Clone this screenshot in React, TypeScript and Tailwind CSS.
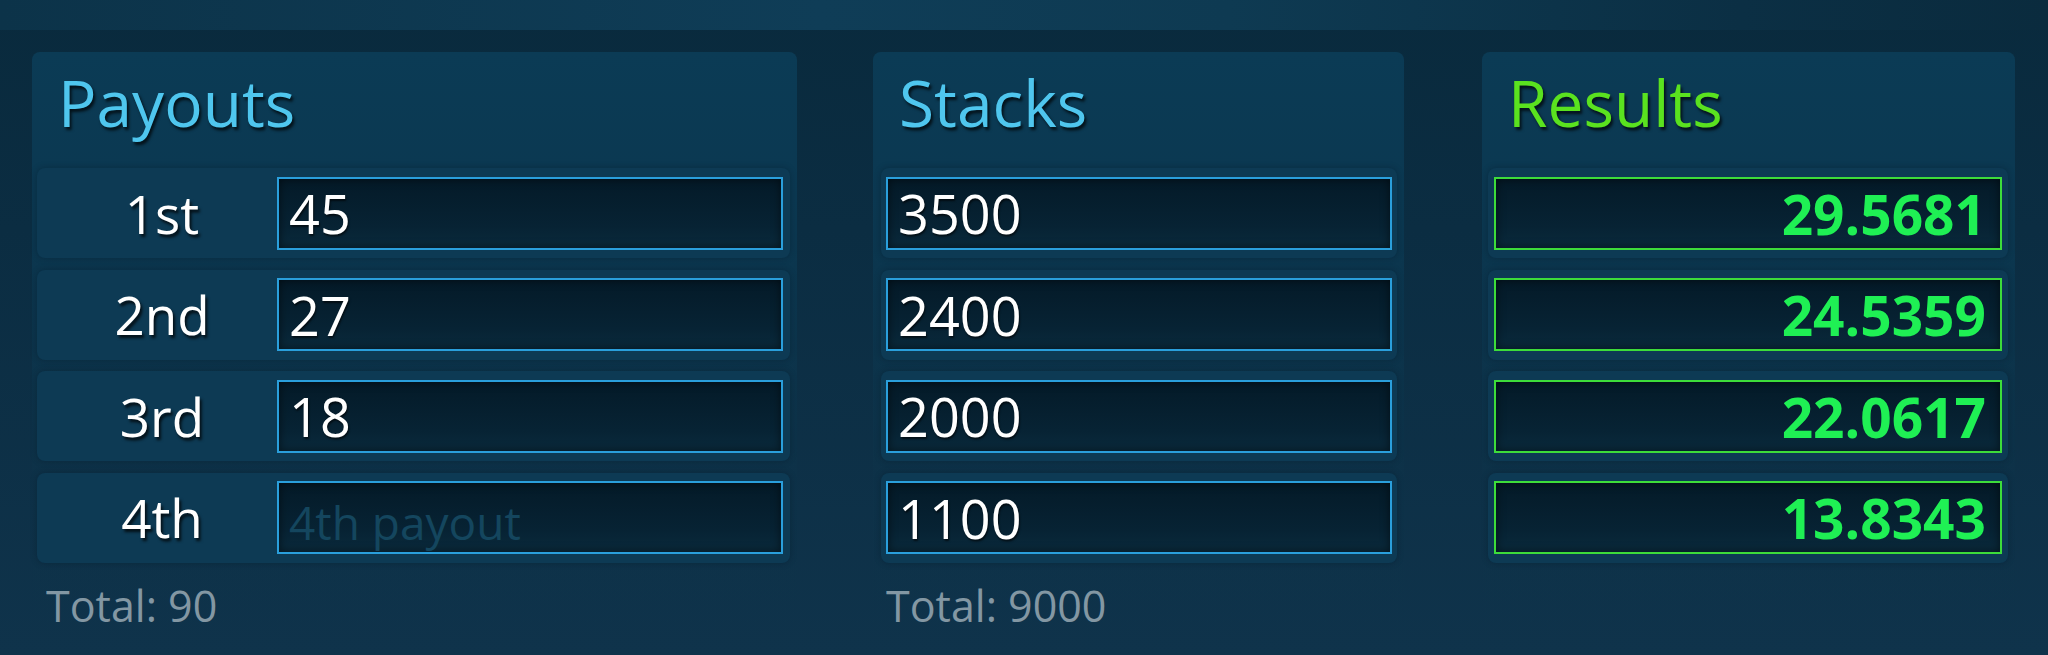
import React from "react";

const shadowText = "[text-shadow:2px_3px_3px_rgba(0,0,0,0.75)]";

function Title({ text, color }: { text: string; color: string }) {
  return (
    <div
      className={`pl-[26px] h-[64px] leading-[64px] text-[64px] ${color} [text-shadow:2px_3px_3px_rgba(0,0,0,0.7)]`}
    >
      {text}
    </div>
  );
}

function Row({ children, cls }: { children: React.ReactNode; cls: string }) {
  return (
    <div
      className={`h-[90px] flex items-center rounded-[8px] bg-[#0d3a54] shadow-[0_0_6px_rgba(0,20,35,0.35)] ${cls}`}
    >
      {children}
    </div>
  );
}

function Field({
  value,
  placeholder,
  green,
}: {
  value?: string;
  placeholder?: string;
  green?: boolean;
}) {
  return (
    <div
      className={`flex-1 h-[73px] flex items-center border-2 ${
        green
          ? "border-[#3ddc3a] justify-end pr-[14px]"
          : "border-[#2a9fdc] pl-[10px]"
      } bg-[linear-gradient(180deg,#041a28_0%,#072334_70%,#0a2a3c_100%)] shadow-[inset_0_0_10px_rgba(0,0,0,0.55)]`}
    >
      {value ? (
        <span
          className={
            green
              ? "text-[55px] font-bold text-[#1ff054] leading-none"
              : "text-[54px] text-white leading-none [text-shadow:1px_2px_2px_rgba(0,0,0,0.6)]"
          }
        >
          {value}
        </span>
      ) : (
        <span className="text-[46px] text-[#14465e] leading-none pt-[8px]">{placeholder}</span>
      )}
    </div>
  );
}

const panelBg =
  "rounded-[8px] bg-[linear-gradient(180deg,#0b3b55_0%,#0b3851_25%,rgba(13,52,74,0.4)_70%,rgba(14,50,72,0)_100%)]";

export default function App() {
  const payouts = [
    { label: "1st", value: "45" },
    { label: "2nd", value: "27" },
    { label: "3rd", value: "18" },
    { label: "4th", value: "", placeholder: "4th payout" },
  ];
  const stacks = ["3500", "2400", "2000", "1100"];
  const results = ["29.5681", "24.5359", "22.0617", "13.8343"];

  return (
    <div className="w-[2048px] h-[655px] overflow-hidden bg-[linear-gradient(180deg,#092a3d_0%,#0b2d42_35%,#0f334b_100%)] font-['Open_Sans',_'Noto_Sans',_sans-serif]">
      <div className="h-[30px] bg-[linear-gradient(90deg,#0c3349_0%,#0f3d57_40%,#0e3a52_60%,#0b2f44_85%,#0a2b3e_100%)]" />
      <div className="flex pl-[32px] pt-[22px]">
        {/* Payouts */}
        <div className={`w-[765px] h-[580px] pt-[19px] ${panelBg}`}>
          <Title text="Payouts" color="text-[#4fc6ee]" />
          <div className="mt-[33px] ml-[5px] mr-[7px] flex flex-col gap-[11.5px]">
            {payouts.map((p) => (
              <Row key={p.label} cls="pr-[7px]">
                <div
                  className={`w-[240px] pl-[10px] text-center text-[53px] text-white leading-none ${shadowText}`}
                >
                  {p.label}
                </div>
                <Field value={p.value} placeholder={p.placeholder} />
              </Row>
            ))}
          </div>
          <div className="mt-[21px] pl-[14px] text-[43px] leading-[43px] text-[#8397a3]">
            Total: 90
          </div>
        </div>

        {/* Stacks */}
        <div className={`ml-[76px] w-[531px] h-[580px] pt-[19px] ${panelBg}`}>
          <Title text="Stacks" color="text-[#4fc6ee]" />
          <div className="mt-[33px] ml-[8px] mr-[7px] flex flex-col gap-[11.5px]">
            {stacks.map((s) => (
              <Row key={s} cls="px-[5px]">
                <Field value={s} />
              </Row>
            ))}
          </div>
          <div className="mt-[21px] pl-[13px] text-[43px] leading-[43px] text-[#8397a3]">
            Total: 9000
          </div>
        </div>

        {/* Results */}
        <div className={`ml-[78px] w-[533px] h-[580px] pt-[19px] ${panelBg}`}>
          <Title text="Results" color="text-[#5ae21f]" />
          <div className="mt-[33px] ml-[6px] mr-[7px] flex flex-col gap-[11.5px]">
            {results.map((r) => (
              <Row key={r} cls="px-[6px]">
                <Field value={r} green />
              </Row>
            ))}
          </div>
        </div>
      </div>
    </div>
  );
}
